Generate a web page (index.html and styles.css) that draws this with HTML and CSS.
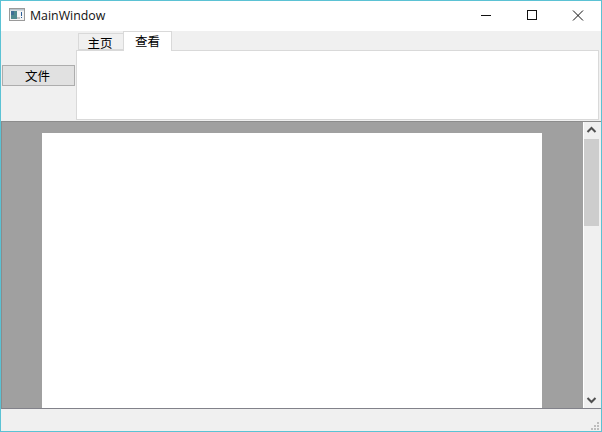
FILE: index.html
```html
<!DOCTYPE html>
<html lang="zh">
<head>
<meta charset="utf-8">
<title>MainWindow</title>
<link rel="stylesheet" href="styles.css">
</head>
<body>
<div class="window">
  <header class="titlebar">
    <svg class="app-icon" width="16" height="14" viewBox="0 0 16 14">
      <rect x="0.5" y="0.5" width="15" height="12" fill="#f4f4f4" stroke="#9a9a9a"/>
      <rect x="1" y="1" width="14" height="1.5" fill="#b8c4cc"/>
      <rect x="2" y="3" width="6" height="8" fill="#4f8a8f"/>
      <rect x="2" y="3" width="3" height="4" fill="#3f6f95"/>
      <rect x="8" y="9" width="3" height="2" fill="#c4c4c4"/>
      <rect x="12" y="4" width="1" height="4" fill="#2d5f9a"/>
      <rect x="12" y="9" width="1" height="1" fill="#2d5f9a"/>
    </svg>
    <span class="title">MainWindow</span>
    <div class="controls">
      <svg class="ctl" width="46" height="30" viewBox="0 0 46 30"><path d="M18 14.5h10" stroke="#111" fill="none"/></svg>
      <svg class="ctl" width="46" height="30" viewBox="0 0 46 30"><rect x="18.5" y="9.5" width="9" height="9" stroke="#111" fill="none"/></svg>
      <svg class="ctl" width="46" height="30" viewBox="0 0 46 30"><path d="M18 9.5l10 10M28 9.5l-10 10" stroke="#111" fill="none"/></svg>
    </div>
  </header>
  <section class="ribbon">
    <div class="file-col"><button class="file-btn">文件</button></div>
    <div class="ribbon-main">
      <div class="tabs">
        <div class="tab">主页</div>
        <div class="tab active">查看</div>
      </div>
      <div class="panel"></div>
    </div>
  </section>
  <main class="viewer">
    <div class="canvas"><div class="page"></div></div>
    <div class="scrollbar">
      <svg class="arrow" width="15" height="16" viewBox="0 0 15 16"><path d="M3.5 10l4-4 4 4" stroke="#505050" stroke-width="2" fill="none"/></svg>
      <div class="track"><div class="thumb"></div></div>
      <svg class="arrow" width="15" height="16" viewBox="0 0 15 16"><path d="M3.5 6l4 4 4-4" stroke="#505050" stroke-width="2" fill="none"/></svg>
    </div>
  </main>
  <footer class="statusbar">
    <svg class="grip" width="8" height="8" viewBox="0 0 8 8" fill="#bdbdbd">
      <rect x="6" y="0" width="2" height="2"/>
      <rect x="3" y="3" width="2" height="2"/><rect x="6" y="3" width="2" height="2"/>
      <rect x="0" y="6" width="2" height="2"/><rect x="3" y="6" width="2" height="2"/><rect x="6" y="6" width="2" height="2"/>
    </svg>
  </footer>
</div>
</body>
</html>
```
FILE: styles.css
```css
* { box-sizing: border-box; }
html, body { margin: 0; height: 100%; overflow: hidden; }
body { font-family: "Liberation Sans", "Noto Sans CJK SC", sans-serif; }
.window {
  width: 602px; height: 432px;
  border: 1px solid #5bc2d4;
  display: flex; flex-direction: column;
  background: #f0f0f0;
}
.titlebar {
  height: 30px; flex: none;
  background: #fff;
  display: flex; align-items: center;
  padding-left: 8px;
}
.app-icon { flex: none; margin-bottom: 2px; }
.title { margin-left: 5px; font: 12.35px "Open Sans", "Liberation Sans", sans-serif; color: #111; margin-top: -2px; }
.controls { margin-left: auto; display: flex; }
.ctl { display: block; }
.ribbon { height: 90px; flex: none; display: flex; }
.file-col { width: 75px; flex: none; display: flex; align-items: center; padding-left: 1px; padding-bottom: 2px; }
.file-btn {
  width: 73px; height: 21px; padding: 0 2px 0 0;
  background: #e1e1e1; border: 1px solid #adadad; border-radius: 0;
  font: 400 12.5px "Noto Sans CJK SC", sans-serif; color: #000;
}
.ribbon-main { flex: 1; display: flex; flex-direction: column; padding-right: 2px; }
.tabs { height: 19px; flex: none; display: flex; align-items: flex-end; padding-left: 2px; position: relative; z-index: 1; }
.tab {
  height: 17px; width: 45px; padding-right: 2px;
  border: 1px solid #d9d9d9; border-right: 0;
  background: #f0f0f0;
  font: 400 12.5px/17px "Noto Sans CJK SC", sans-serif; color: #000; text-align: center;
}
.tab.active {
  height: 20px; width: 49px; padding-right: 0; background: #fff;
  border-right: 1px solid #d9d9d9; border-bottom: 0;
  line-height: 18px;
  margin-bottom: -1px;
}
.panel { height: 70px; background: #fff; border: 1px solid #d9d9d9; }
.viewer {
  flex: 1; min-height: 0; display: flex;
  border-top: 1px solid #8c8c8c; border-left: 1px solid #8c8c8c; border-bottom: 1px solid #82828a;
}
.canvas { flex: 1; background: #a0a0a0; padding: 11px 0 0 40px; overflow: hidden; }
.page { background: #fff; width: 500px; height: 100%; }
.scrollbar { width: 18px; flex: none; background: #f0f0f0; display: flex; flex-direction: column; align-items: flex-start; border-left: 1px solid #fff; }
.arrow { flex: none; display: block; }
.track { flex: 1; width: 15px; }
.thumb { height: 87px; background: #cdcdcd; margin-top: 1px; }
.statusbar { height: 22px; flex: none; display: flex; justify-content: flex-end; align-items: flex-end; padding: 0 2px 1px 0; }
.grip { display: block; }
```
